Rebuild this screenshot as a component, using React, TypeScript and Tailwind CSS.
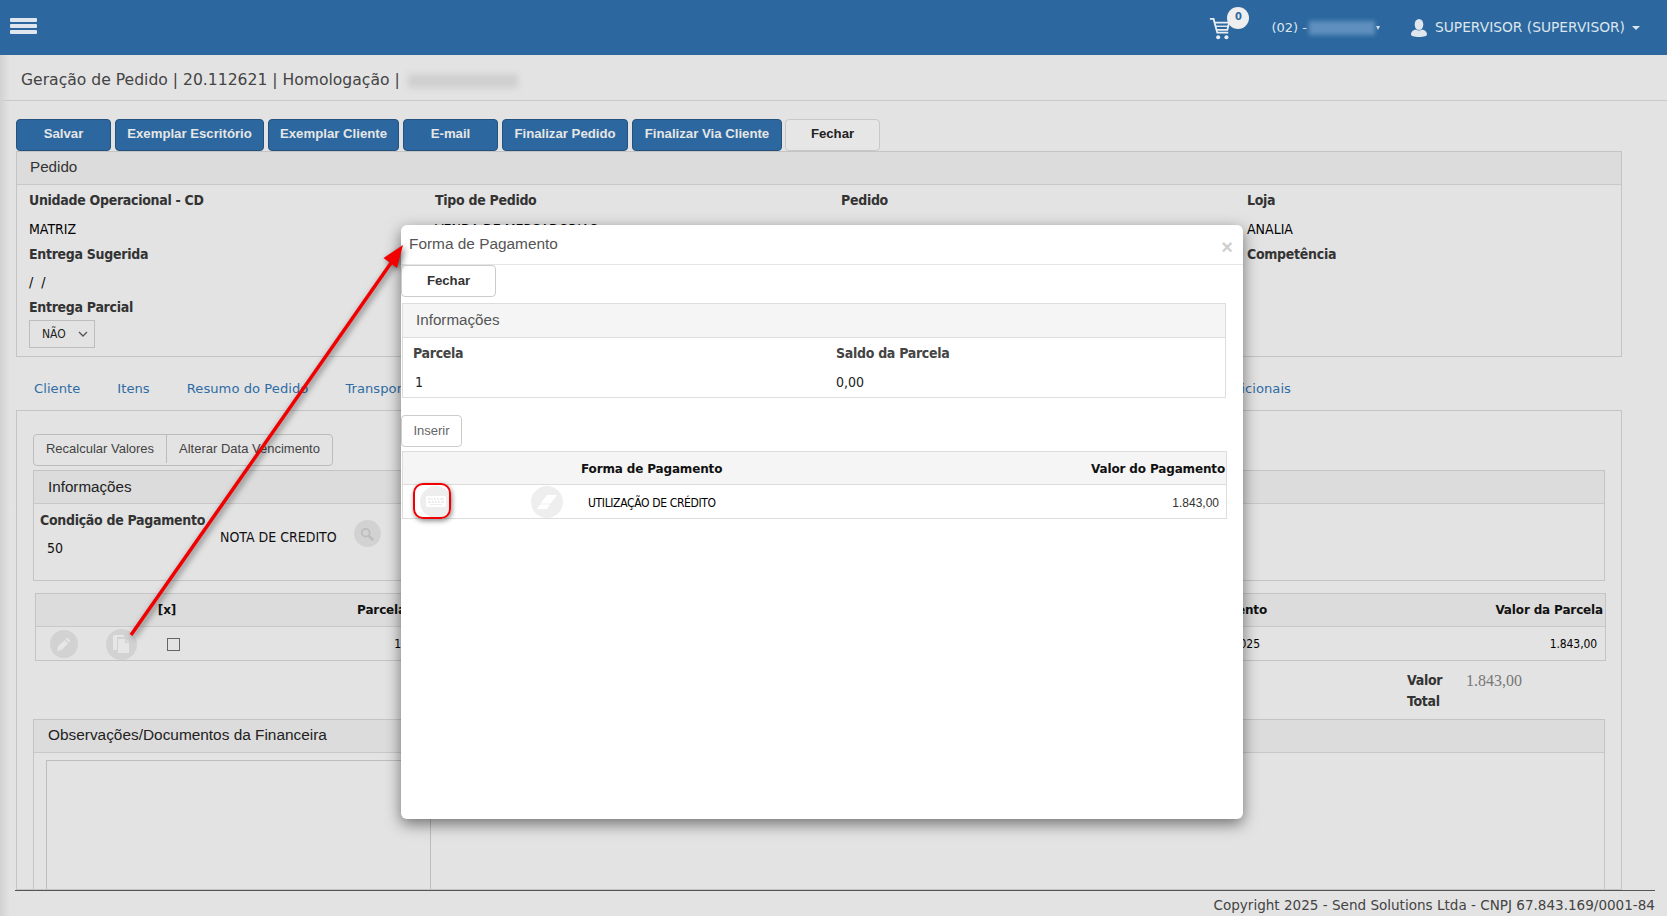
import React from "react";

const V = "[font-family:'DejaVu_Sans',sans-serif]";
const T = "[font-family:'DejaVu_Sans_Condensed','DejaVu_Sans',sans-serif]";
const A = "[font-family:'Liberation_Sans',sans-serif]";

function PrimaryBtn({ w, label }: { w: string; label: string }) {
  return (
    <button className={`${w} h-8 rounded-[4px] border border-[#24527d] bg-[#2c689f] pb-[2px] text-[13.2px] font-bold text-[#e6e6e6] ${A}`}>
      {label}
    </button>
  );
}

function Field({ label, value, className = "" }: { label: string; value?: React.ReactNode; className?: string }) {
  return (
    <div className={className}>
      <div className={`h-[29px] pt-[3px] text-[14px] font-bold leading-[22px] tracking-[-0.3px] text-[#333] ${T}`}>{label}</div>
      <div className={`h-[25px] pt-[4px] text-[14px] leading-[20px] text-black ${T}`}>{value}</div>
    </div>
  );
}

function Circle({ size, bg = "bg-[#d2d2d2]", children }: { size: string; bg?: string; children?: React.ReactNode }) {
  return <div className={`${size} ${bg} flex items-center justify-center rounded-full`}>{children}</div>;
}

export default function App() {
  return (
    <div className="relative flex h-[916px] w-[1667px] flex-col overflow-hidden bg-[#e3e3e3]">
      {/* top bar */}
      <header className="flex h-[55px] shrink-0 items-center bg-[#2c689f] pl-[10px] pr-[27px]">
        <div className="mb-[4px] flex w-[27px] flex-col gap-[2px]">
          <span className="h-[4px] rounded-[1px] bg-[#dfe6ee]" />
          <span className="h-[4px] rounded-[1px] bg-[#dfe6ee]" />
          <span className="h-[4px] rounded-[1px] bg-[#dfe6ee]" />
        </div>
        <div className={`ml-auto flex items-center text-[13.8px] text-[#dde5ee] ${V}`}>
          <div className="relative mr-[40px] h-[24px] w-[22px]">
            <svg viewBox="0 0 24 26" className="absolute left-0 top-[1px] h-[24px] w-[22px]" fill="none" stroke="#e9eef4" strokeWidth="2">
              <path d="M1 2h4l4 15h12" />
              <path d="M6 6h16l-2 8H8" />
              <path d="M7 10h14" strokeWidth="1.500" />
              <circle cx="10" cy="22" r="2.200" fill="#e9eef4" stroke="none" />
              <circle cx="19" cy="22" r="2.200" fill="#e9eef4" stroke="none" />
            </svg>
            <span className={`absolute left-[18px] top-[-9px] flex h-[22px] w-[22px] items-center justify-center rounded-full bg-[#eeeeee] text-[11px] font-bold text-[#2c689f] ${T}`}>0</span>
          </div>
          <span className="text-[13px]">(02) -</span>
          <span className="ml-[2px] h-[14px] w-[66px] bg-[#5f8fbd] blur-[2px]" />
          <span className="ml-[1px] h-0 w-0 border-x-[2px] border-t-[4px] border-x-transparent border-t-[#dde5ee]" />
          <svg viewBox="0 0 16 18" className="ml-[31px] h-[18px] w-[16px]" fill="#dfe6ee">
            <ellipse cx="8" cy="5.500" rx="4.300" ry="5.500" />
            <path d="M0 15.500c0-3 2.500-4.500 5-5 1.500 1.400 4.500 1.400 6 0 2.500.5 5 2 5 5 0 1.500-3 2.500-8 2.500s-8-1-8-2.500z" />
          </svg>
          <span className="ml-[8px]">SUPERVISOR (SUPERVISOR)</span>
          <span className="ml-[7px] h-0 w-0 border-x-[4px] border-t-[4px] border-x-transparent border-t-[#dde5ee]" />
        </div>
      </header>

      {/* page title */}
      <div className={`flex h-[46px] shrink-0 items-center border-b border-[#c9c9c9] pl-[21px] pt-[6px] text-[15.6px] text-[#444] ${V}`}>
        <span>Geração de Pedido | 20.112621 | Homologação |</span>
        <span className="ml-[8px] h-[14px] w-[110px] bg-[#cfcfcf] blur-[3px]" />
      </div>

      {/* content */}
      <main className="min-h-0 flex-1 overflow-hidden pl-4 pr-[45px] pt-[18px]">
        <div className="flex gap-[4px]">
          <PrimaryBtn w="w-[95px]" label="Salvar" />
          <PrimaryBtn w="w-[149px]" label="Exemplar Escritório" />
          <PrimaryBtn w="w-[131px]" label="Exemplar Cliente" />
          <PrimaryBtn w="w-[95px]" label="E-mail" />
          <PrimaryBtn w="w-[126px]" label="Finalizar Pedido" />
          <PrimaryBtn w="w-[150px]" label="Finalizar Via Cliente" />
          <button className={`ml-[-1px] h-8 w-[95px] rounded-[4px] border border-[#c8c8c8] bg-[#e6e6e6] pb-[2px] text-[13.2px] font-bold text-[#222] ${A}`}>Fechar</button>
        </div>

        <section className="h-[206px] border border-[#c4c4c4]">
          <div className={`flex h-[33px] items-center border-b border-[#c8c8c8] bg-[#dcdcdc] pb-[2px] pl-[13px] text-[15.2px] text-[#333] ${A}`}>Pedido</div>
          <div className="grid grid-cols-[406px_406px_406px_1fr] pl-[12px] pt-[1px]">
            <Field label="Unidade Operacional - CD" value="MATRIZ" />
            <Field label="Tipo de Pedido" value="VENDA DE MERCADORIAS" />
            <Field label="Pedido" value="" />
            <Field label="Loja" value="ANALIA" />
            <Field label="Entrega Sugerida" value={<span className="relative top-[-1px] [word-spacing:4px]">/ /</span>} />
            <Field label="Data" value="" />
            <Field label="Previsão" value="" />
            <Field label="Competência" value="" />
          </div>
          <div className="pl-[12px]">
            <div className={`h-[26px] pt-[2px] text-[14px] font-bold leading-[22px] tracking-[-0.3px] text-[#333] ${T}`}>Entrega Parcial</div>
            <div className={`flex h-[28px] w-[66px] items-center justify-between border border-[#bdbdbd] pl-[12px] pr-[6px] text-[12px] text-[#222] ${T}`}>
              <span>NÃO</span>
              <svg viewBox="0 0 10 6" className="h-[6px] w-[10px]" fill="none" stroke="#555" strokeWidth="1.3"><path d="M1 1l4 4 4-4" /></svg>
            </div>
          </div>
        </section>

        {/* tabs */}
        <nav className={`flex h-[53px] items-center pl-[18px] pt-[11px] text-[13.1px] tracking-[0.05px] text-[#2f6ca5] ${V}`}>
          <span>Cliente</span>
          <span className="ml-[37px]">Itens</span>
          <span className="ml-[37px]">Resumo do Pedido</span>
          <span className="ml-[37px]">Transportadora</span>
          <span className="ml-auto mr-[331px]">Informações Adicionais</span>
        </nav>

        {/* tab pane */}
        <section className="h-[480px] overflow-hidden border border-[#c4c4c4] px-4 pt-[23px]">
          <div className={`flex h-8 w-[300px] rounded-[4px] border border-[#bcbcbc] pb-[2px] text-[13px] text-[#444] ${A}`}>
            <span className="flex w-[133px] items-center justify-center border-r border-[#bcbcbc]">Recalcular Valores</span>
            <span className="flex flex-1 items-center justify-center">Alterar Data Vencimento</span>
          </div>

          <div className="mt-[4px] h-[111px] border border-[#c4c4c4]">
            <div className={`flex h-[33px] items-center border-b border-[#c8c8c8] bg-[#dcdcdc] pl-[14px] text-[15.2px] text-[#222] ${A}`}>Informações</div>
            <div className="flex pl-[6px] pt-[5px]">
              <div className="w-[180px]">
                <div className={`text-[14px] font-bold leading-[22px] tracking-[-0.3px] text-[#333] ${T}`}>Condição de Pagamento</div>
                <div className={`ml-[7px] mt-[7px] text-[14px] leading-[20px] text-[#111] ${T}`}>50</div>
              </div>
              <div className={`mt-[16px] text-[14px] leading-[24px] text-[#111] ${T}`}>NOTA DE CREDITO</div>
              <div className="ml-[17px] mt-[11px]">
                <Circle size="h-[27px] w-[27px]">
                  <svg viewBox="0 0 16 16" className="h-[14px] w-[14px]" fill="none" stroke="#bdbdbd" strokeWidth="2">
                    <circle cx="6.500" cy="6.500" r="4.500" />
                    <path d="M10 10l5 5" strokeWidth="3" />
                  </svg>
                </Circle>
              </div>
            </div>
          </div>

          <div className="ml-[2px] mt-[12px] w-[1571px] border border-[#c4c4c4]">
            <div className={`flex h-[33px] items-center border-b border-[#c8c8c8] bg-[#dcdcdc] text-[12px] font-bold tracking-[-0.15px] text-[#111] ${V}`}>
              <span className="w-[116px]" />
              <span className="w-[30px] text-center">[x]</span>
              <span className="w-[224px] text-right">Parcela</span>
              <span className="w-[861px] text-right">Data de Vencimento</span>
              <span className="flex-1 pr-[2px] text-right">Valor da Parcela</span>
            </div>
            <div className={`flex h-[33px] items-center pt-[1px] text-[12px] text-black ${T}`}>
              <span className="flex w-[55px] justify-center">
                <Circle size="h-[28px] w-[28px]">
                  <svg viewBox="0 0 16 16" className="h-[16px] w-[16px]" fill="#e6e6e6">
                    <path d="M11 1.500l3.500 3.500-1.600 1.600-3.500-3.500zM8.600 3.900l3.500 3.500L5.500 14 1 15l1-4.500z" />
                  </svg>
                </Circle>
              </span>
              <span className="flex w-[60px] justify-center">
                <Circle size="h-[31px] w-[31px]">
                  <svg viewBox="0 0 20 20" className="h-[20px] w-[20px]" fill="#e6e6e6">
                    <path d="M2 2.500A1.500 1.500 0 0 1 3.500 1H13v2H6v13H2z" />
                    <path d="M7 5h7v4h4v10H7zM15.500 5.500l2.500 2.500h-2.500z" />
                  </svg>
                </Circle>
              </span>
              <span className="flex w-[45px] justify-center">
                <span className="h-[13px] w-[13px] border border-[#666]" />
              </span>
              <span className="w-[205px] text-right">1</span>
              <span className="w-[859px] text-right">10/10/2025</span>
              <span className="flex-1 pr-[8px] text-right tracking-[-0.1px]">1.843,00</span>
            </div>
          </div>

          <div className="flex h-[58px] pl-[1374px] pt-[9px]">
            <div className={`w-[59px] text-[14px] font-bold leading-[21px] tracking-[-0.3px] text-[#333] ${T}`}>Valor Total</div>
            <div className="text-[16px] leading-[21px] text-[#777] [font-family:'Liberation_Serif',serif]">1.843,00</div>
          </div>

          <div className="h-[200px] border border-[#c4c4c4]">
            <div className={`flex h-[33px] items-center border-b border-[#c8c8c8] bg-[#dcdcdc] pb-[2px] pl-[14px] text-[15.4px] text-[#222] ${A}`}>Observações/Documentos da Financeira</div>
            <div className="ml-[12px] mt-[7px] h-[160px] w-[385px] border border-[#bdbdbd]" />
          </div>
        </section>
      </main>

      {/* footer */}
      <footer className={`ml-[15px] mr-[12px] flex h-[26px] shrink-0 items-center justify-end border-t border-[#555] pt-[3px] text-[13.55px] text-[#444] ${V}`}>
        Copyright 2025 - Send Solutions Ltda - CNPJ 67.843.169/0001-84
      </footer>

      {/* shadow along the left edge */}
      <div className="pointer-events-none absolute bottom-0 left-0 top-[55px] w-[10px] bg-gradient-to-r from-[#d2d2d2] to-transparent" />

      {/* modal */}
      <div className="absolute left-[401px] top-[225px] h-[594px] w-[842px] rounded-[6px] bg-white shadow-[0_5px_15px_rgba(0,0,0,0.5)]">
        <div className={`relative flex h-[40px] items-center border-b border-[#e5e5e5] pb-[1px] pl-[8px] text-[15.4px] text-[#555] ${A}`}>
          Forma de Pagamento
          <span className="absolute right-[10px] top-[12px] text-[20px] font-bold leading-[20px] text-[#cfcfcf]">×</span>
        </div>
        <button className={`h-8 w-[95px] rounded-[4px] border border-[#cccccc] bg-white text-[13.2px] font-bold text-[#333] ${A}`}>Fechar</button>

        <div className="ml-px mt-[6px] h-[95px] w-[824px] border border-[#dddddd]">
          <div className={`flex h-[34px] items-center border-b border-[#dddddd] bg-[#f5f5f5] pl-[13px] text-[15.2px] text-[#555] ${A}`}>Informações</div>
          <div className="grid grid-cols-[423px_1fr] pl-[10px] pt-[4px]">
            <div className={`text-[14px] font-bold leading-[22px] tracking-[-0.3px] text-[#444] ${T}`}>Parcela</div>
            <div className={`text-[14px] font-bold leading-[22px] tracking-[-0.3px] text-[#444] ${T}`}>Saldo da Parcela</div>
            <div className={`ml-[2px] mt-[8px] text-[14px] leading-[20px] text-[#222] ${T}`}>1</div>
            <div className={`mt-[8px] text-[14px] leading-[20px] text-[#222] ${T}`}>0,00</div>
          </div>
        </div>

        <button className={`mt-[17px] block h-8 w-[61px] rounded-[4px] border border-[#cccccc] bg-white pb-[1px] text-[13px] text-[#666] ${A}`}>Inserir</button>

        <div className="ml-[1px] mt-[4px] w-[825px] border border-[#dddddd]">
          <div className={`flex h-[33px] items-center border-b border-[#dddddd] bg-[#f5f5f5] pt-[1px] text-[12px] font-bold tracking-[-0.15px] text-[#111] ${V}`}>
            <span className="ml-[178px]">Forma de Pagamento</span>
            <span className="ml-auto pr-px">Valor do Pagamento</span>
          </div>
          <div className="relative flex h-[33px] items-center">
            <span className="ml-[14px] flex w-[37px] justify-center">
              <Circle size="h-[32px] w-[32px]" bg="bg-[#eeeeee]">
                <svg viewBox="0 0 20 11" className="h-[11px] w-[20px]" fill="#ffffff">
                  <path fillRule="evenodd" d="M1 0h18a1 1 0 0 1 1 1v9a1 1 0 0 1-1 1H1a1 1 0 0 1-1-1V1a1 1 0 0 1 1-1zM2 2v2h2V2zm3 0v2h2V2zm3 0v2h2V2zm3 0v2h2V2zm3 0v2h4V2zM2 5v2h3V5zm4 0v2h2V5zm3 0v2h2V5zm3 0v2h2V5zm3 0v2h3V5zM4 8v1h12V8z" />
                </svg>
              </Circle>
            </span>
            <span className="ml-[77px]">
              <Circle size="h-[32px] w-[32px]" bg="bg-[#eeeeee]">
                <svg viewBox="0 0 20 14" className="h-[14px] w-[20px]" fill="#ffffff">
                  <path d="M10 0h10l-6.500 8.500H3.500z" />
                  <path d="M3 9.500h10L10 14H0z" />
                </svg>
              </Circle>
            </span>
            <span className={`ml-[25px] pt-[3px] text-[12px] tracking-[-0.35px] text-black ${T}`}>UTILIZAÇÃO DE CRÉDITO</span>
            <span className={`ml-auto pr-[7px] pt-[3px] text-[12px] text-[#333] ${A}`}>1.843,00</span>
            <span className="absolute left-[10px] top-[-2px] h-[36px] w-[38px] rounded-[10px] border-2 border-[#f00000] shadow-[1px_2px_5px_rgba(0,0,0,0.45)]" />
          </div>
        </div>
      </div>

      {/* annotation arrow */}
      <svg viewBox="0 0 1667 916" className="pointer-events-none absolute inset-0 h-[916px] w-[1667px] drop-shadow-[2px_2px_3px_rgba(0,0,0,0.55)]">
        <line x1="131" y1="635" x2="391" y2="263" stroke="#f00000" strokeWidth="3.500" />
        <polygon points="403,245 397,268 383.500,258" fill="#f00000" />
      </svg>
    </div>
  );
}
